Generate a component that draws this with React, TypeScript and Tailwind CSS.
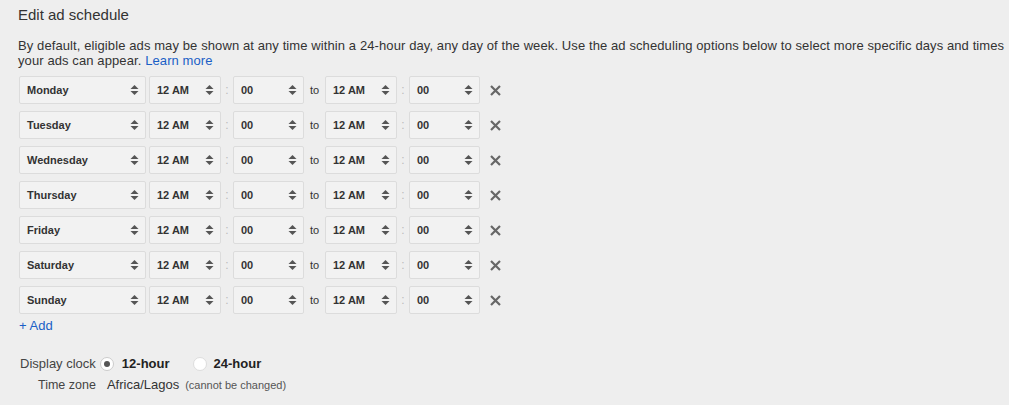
const days = ["Monday", "Tuesday", "Wednesday", "Thursday", "Friday", "Saturday", "Sunday"];

const Arrows = () => (
  <svg width="9" height="12" viewBox="0 0 9 12" className="shrink-0">
    <path d="M4.5 1 L8.5 5 L0.5 5 Z" fill="#555" />
    <path d="M4.5 11 L8.5 7 L0.5 7 Z" fill="#555" />
  </svg>
);

const Select = ({ label, w }: { label: string; w: string }) => (
  <div
    className={`${w} h-[28px] flex items-center justify-between pl-[7px] pr-[6px] bg-[#f2f2f2] border border-[#dcdcdc] rounded-[2px] text-[11px] font-bold text-[#333]`}
  >
    <span>{label}</span>
    <Arrows />
  </div>
);

const Colon = () => (
  <span className="w-[12px] text-center text-[#bbb] text-[12px]">:</span>
);

const Row = ({ day }: { day: string }) => (
  <div className="flex items-center h-[28px]">
    <Select label={day} w="w-[127px]" />
    <div className="w-[3px]" />
    <Select label="12 AM" w="w-[72px]" />
    <Colon />
    <Select label="00" w="w-[71px]" />
    <span className="w-[21px] text-center text-[11px] text-[#333]">to</span>
    <Select label="12 AM" w="w-[72px]" />
    <Colon />
    <Select label="00" w="w-[71px]" />
    <svg width="11" height="11" viewBox="0 0 11 11" className="ml-[10px]">
      <path d="M1 1 L10 10 M10 1 L1 10" stroke="#666" strokeWidth="2.2" />
    </svg>
  </div>
);

export default function App() {
  return (
    <div className="w-[1009px] h-[405px] bg-[#eeeeee] font-['Liberation_Sans',Arial,sans-serif] text-[#333] pl-[18px] pt-[5px]">
      <h1 className="text-[15px] leading-[20px] text-[#333]">Edit ad schedule</h1>
      <p className="mt-[13px] text-[13px] leading-[15px] text-[#333] pr-[4px] tracking-[0.1px]">
        By default, eligible ads may be shown at any time within a 24-hour day, any day of the week. Use the ad scheduling options below to select more specific days and times your ads can appear.{" "}
        <span className="text-[#1a5fc6]">Learn more</span>
      </p>
      <div className="mt-[8px] ml-[1px] flex flex-col gap-[7px]">
        {days.map((d) => (
          <Row key={d} day={d} />
        ))}
      </div>
      <div className="mt-[4px] ml-[1px] text-[13px] leading-[15px] text-[#1a5fc6]">+ Add</div>
      <div className="mt-[23px] ml-[2px] flex items-center text-[13px] leading-[16px]">
        <span className="text-[#444]">Display clock</span>
        <span className="ml-[4px] w-[14px] h-[14px] rounded-full bg-white border border-[#ccc] flex items-center justify-center">
          <span className="w-[6px] h-[6px] rounded-full bg-[#555]" />
        </span>
        <span className="ml-[8px] font-bold text-[#222]">12-hour</span>
        <span className="ml-[23px] w-[14px] h-[14px] rounded-full bg-white border border-[#ddd]" />
        <span className="ml-[7px] font-bold text-[#222]">24-hour</span>
      </div>
      <div className="mt-[5px] ml-[20px] flex items-baseline text-[12.5px] leading-[15px] text-[#444]">
        <span>Time zone</span>
        <span className="ml-[11px] text-[13px] text-[#333]">Africa/Lagos</span>
        <span className="ml-[6px] text-[11px] text-[#555]">(cannot be changed)</span>
      </div>
    </div>
  );
}
